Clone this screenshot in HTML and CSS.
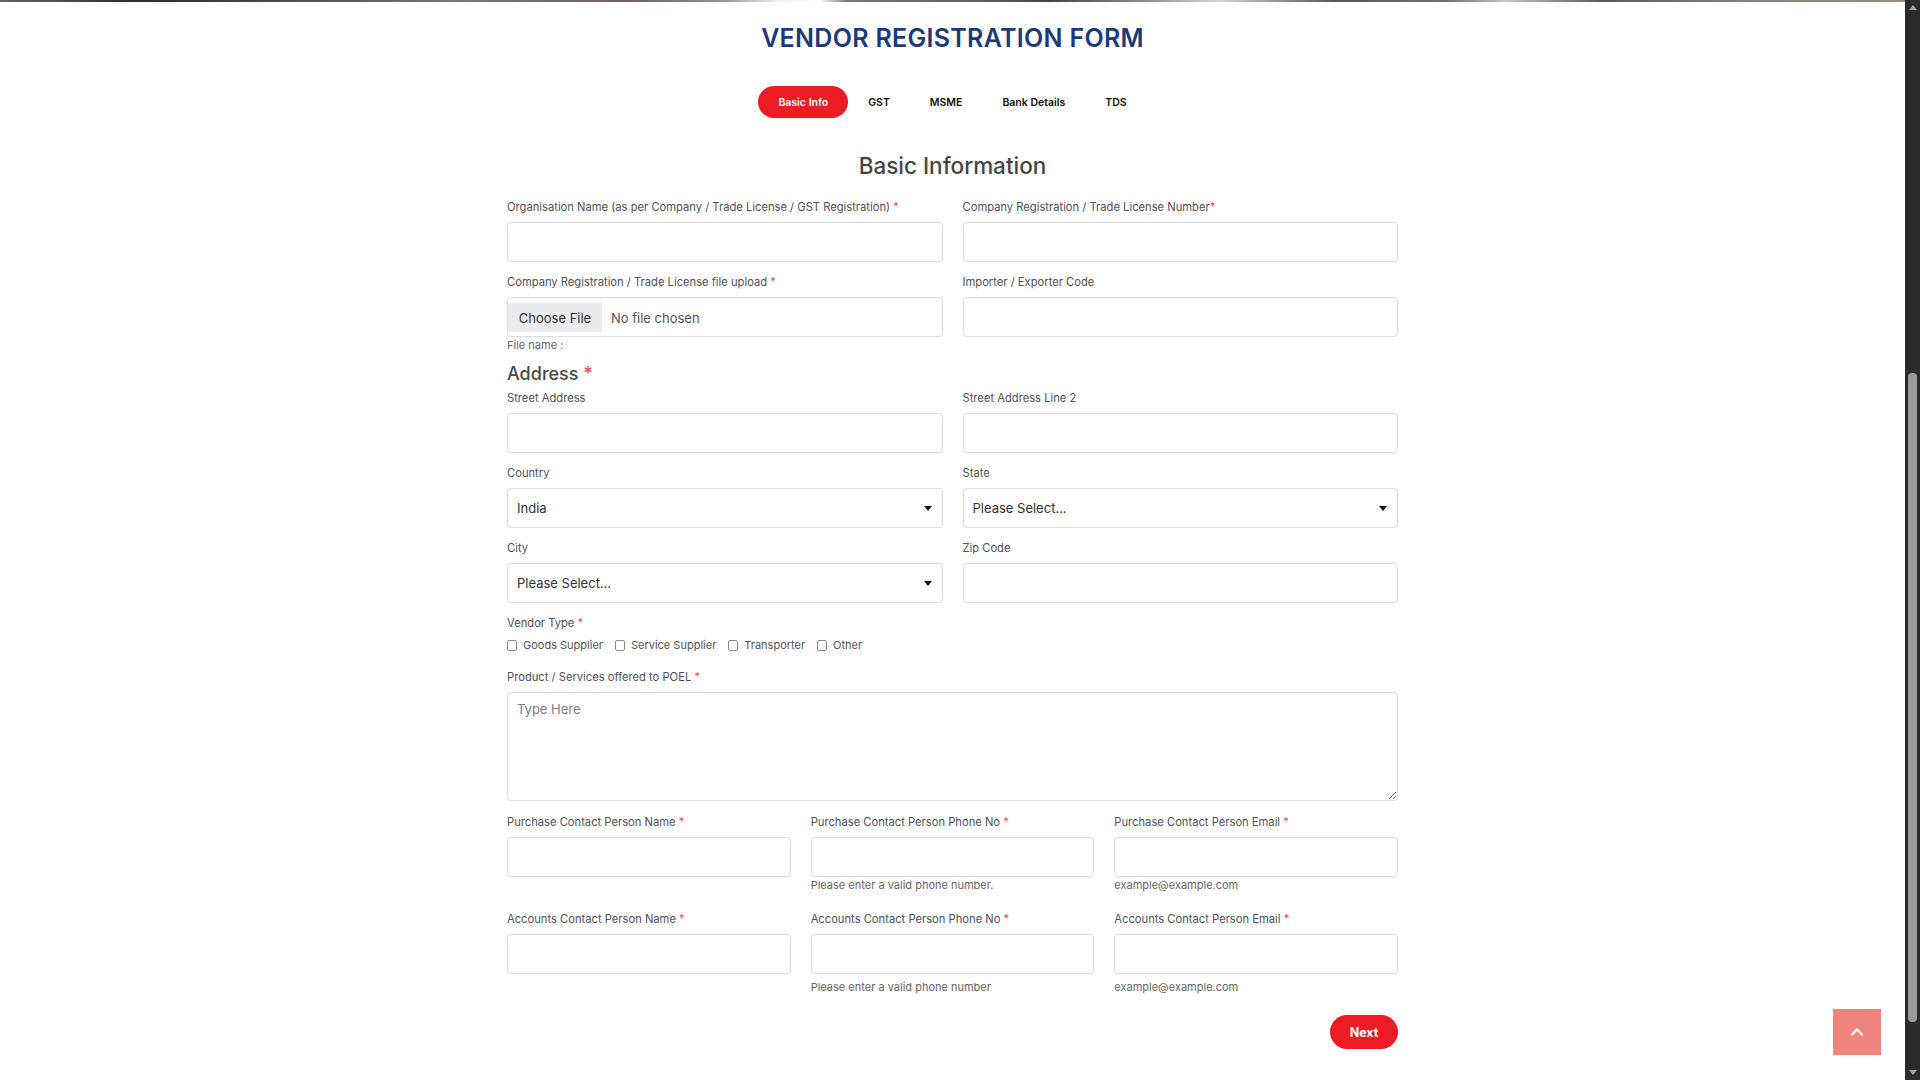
FILE: index.html
```html
<!DOCTYPE html>
<html lang="en">
<head>
<meta charset="utf-8">
<title>Vendor Registration Form</title>
<link rel="stylesheet" href="styles.css">
</head>
<body>
<div class="page">
  <main class="main">
    <div class="strip"></div>
    <h1 class="title">VENDOR REGISTRATION FORM</h1>
    <nav class="tabs">
      <span class="tab active">Basic Info</span>
      <span class="tab">GST</span>
      <span class="tab">MSME</span>
      <span class="tab">Bank Details</span>
      <span class="tab">TDS</span>
    </nav>

    <section class="form">
      <h2 class="section-title">Basic Information</h2>

      <div class="grid2 row-first">
        <div class="field">
          <label class="label">Organisation Name (as per Company / Trade License / GST Registration) <span class="req">*</span></label>
          <input class="control" type="text">
        </div>
        <div class="field">
          <label class="label">Company Registration / Trade License Number<span class="req">*</span></label>
          <input class="control" type="text">
        </div>
      </div>

      <div class="grid2 row-tight">
        <div class="field">
          <label class="label">Company Registration / Trade License file upload <span class="req">*</span></label>
          <div class="control file">
            <span class="file-btn">Choose File</span>
            <span class="file-text">No file chosen</span>
          </div>
          <div class="hint hint-file">File name :</div>
        </div>
        <div class="field">
          <label class="label">Importer / Exporter Code</label>
          <input class="control" type="text">
        </div>
      </div>

      <h3 class="address">Address <span class="req">*</span></h3>

      <div class="grid2 row">
        <div class="field">
          <label class="label">Street Address</label>
          <input class="control" type="text">
        </div>
        <div class="field">
          <label class="label">Street Address Line 2</label>
          <input class="control" type="text">
        </div>
      </div>

      <div class="grid2 row">
        <div class="field">
          <label class="label">Country</label>
          <div class="control select"><span>India</span><i class="caret"></i></div>
        </div>
        <div class="field">
          <label class="label">State</label>
          <div class="control select"><span>Please Select...</span><i class="caret"></i></div>
        </div>
      </div>

      <div class="grid2 row">
        <div class="field">
          <label class="label">City</label>
          <div class="control select"><span>Please Select...</span><i class="caret"></i></div>
        </div>
        <div class="field">
          <label class="label">Zip Code</label>
          <input class="control" type="text">
        </div>
      </div>

      <div class="vendor">
        <label class="label">Vendor Type <span class="req">*</span></label>
        <div class="checks">
          <span class="check"><i class="box"></i>Goods Supplier</span>
          <span class="check"><i class="box"></i>Service Supplier</span>
          <span class="check"><i class="box"></i>Transporter</span>
          <span class="check"><i class="box"></i>Other</span>
        </div>
      </div>

      <div class="products">
        <label class="label">Product / Services offered to POEL <span class="req">*</span></label>
        <textarea class="textarea" placeholder="Type Here"></textarea>
      </div>

      <div class="grid3 row-purchase">
        <div class="field">
          <label class="label">Purchase Contact Person Name <span class="req">*</span></label>
          <input class="control" type="text">
        </div>
        <div class="field">
          <label class="label">Purchase Contact Person Phone No <span class="req">*</span></label>
          <input class="control" type="text">
          <div class="hint">Please enter a valid phone number.</div>
        </div>
        <div class="field">
          <label class="label">Purchase Contact Person Email <span class="req">*</span></label>
          <input class="control" type="text">
          <div class="hint">example@example.com</div>
        </div>
      </div>

      <div class="grid3 row-accounts">
        <div class="field">
          <label class="label">Accounts Contact Person Name <span class="req">*</span></label>
          <input class="control" type="text">
        </div>
        <div class="field">
          <label class="label">Accounts Contact Person Phone No <span class="req">*</span></label>
          <input class="control" type="text">
          <div class="hint hint-late">Please enter a valid phone number</div>
        </div>
        <div class="field">
          <label class="label">Accounts Contact Person Email <span class="req">*</span></label>
          <input class="control" type="text">
          <div class="hint hint-late">example@example.com</div>
        </div>
      </div>

      <div class="actions">
        <button class="next" type="button">Next</button>
      </div>
    </section>
  </main>

  <div class="scrollbar">
    <div class="sb-btn"><i class="sb-up"></i></div>
    <div class="sb-track"><div class="sb-thumb"></div></div>
    <div class="sb-btn"><i class="sb-down"></i></div>
  </div>
</div>

<a class="to-top" href="#">
  <svg width="16" height="16" viewBox="0 0 16 16" aria-hidden="true"><path d="M3 10.5 L8 5.5 L13 10.5" fill="none" stroke="#fff" stroke-width="2.2" stroke-linecap="round" stroke-linejoin="round"/></svg>
</a>
</body>
</html>
```

FILE: styles.css
```css
* { box-sizing: border-box; }

html, body {
  margin: 0;
  padding: 0;
  background: #fff;
}

body {
  font-family: Inter, "Noto Sans", "Liberation Sans", sans-serif;
  color: #333;
}

.page {
  display: flex;
  height: 1080px;
  overflow: hidden;
}

.main {
  flex: 1;
  display: flex;
  flex-direction: column;
  align-items: center;
  min-width: 0;
}

.strip {
  align-self: stretch;
  height: 2px;
  background: linear-gradient(90deg, #6a625f 0%, #2e2e2e 7%, #4a4646 14%, #7c7674 24%, #6b6063 33%, #9b9396 38%, #f4f2f2 41%, #ffffff 43%, #7a7676 44.5%, #5d5d5b 52%, #3f4540 55%, #8d8c88 60%, #d8d4d2 64%, #5a5656 70%, #77706e 76%, #c9c2c0 79%, #5e5a5a 84%, #8a827e 92%, #9a8f84 100%);
}

.title {
  margin: 21px 0 0;
  font-size: 25px;
  line-height: 30px;
  font-weight: 600;
  letter-spacing: 0.3px;
  color: #1c3a78;
}

.tabs {
  display: flex;
  margin-top: 33px;
}

.tab {
  height: 32px;
  padding: 0 20px;
  border-radius: 16px;
  display: flex;
  align-items: center;
  font-size: 10.5px;
  font-weight: 600;
  color: #111;
}

.tab.active {
  background: #ed1c24;
  color: #fff;
}

.form {
  width: 891px;
  margin-top: 34px;
}

.section-title {
  margin: 0 0 19px;
  text-align: center;
  font-size: 22.5px;
  line-height: 28px;
  font-weight: 500;
  color: #454545;
}

.grid2 {
  display: grid;
  grid-template-columns: 1fr 1fr;
  column-gap: 20px;
}

.grid3 {
  display: grid;
  grid-template-columns: 1fr 1fr 1fr;
  column-gap: 20px;
}

.row-first { margin-bottom: 12px; }
.row { margin-bottom: 12px; }
.row-tight { margin-bottom: 0; }

.field { min-width: 0; }

.label {
  display: block;
  font-size: 11.2px;
  line-height: 16px;
  color: #505058;
  margin-bottom: 7px;
  white-space: nowrap;
}

.req { color: #f04b4b; }

.control {
  display: block;
  width: 100%;
  height: 40px;
  margin: 0;
  border: 1px solid #dcdce2;
  border-radius: 4px;
  background: #fff;
  font-family: inherit;
  font-size: 13px;
  outline: none;
}

.file {
  display: flex;
  align-items: center;
  padding: 5px 0 4px 0;
}

.file-btn {
  align-self: stretch;
  width: 94px;
  display: flex;
  align-items: center;
  justify-content: center;
  background: #e9ebee;
  color: #333;
  font-size: 13px;
}

.file-text {
  margin-left: 9px;
  font-size: 13px;
  color: #555;
}

.hint {
  font-size: 11px;
  line-height: 14px;
  color: #666;
  margin-top: 1px;
}

.hint-file { margin-top: 1px; }
.hint-late { margin-top: 6px; }

.address {
  margin: 11px 0 5px;
  font-size: 18px;
  line-height: 22px;
  font-weight: 500;
  color: #4a4a4a;
}

.select {
  display: flex;
  align-items: center;
  justify-content: space-between;
  padding: 0 10px 0 9px;
  color: #333;
}

.caret {
  width: 0;
  height: 0;
  border-left: 4px solid transparent;
  border-right: 4px solid transparent;
  border-top: 5px solid #111;
}

.checks {
  display: flex;
  align-items: center;
  height: 14px;
  gap: 12px;
}

.check {
  display: flex;
  align-items: center;
  font-size: 11px;
  line-height: 14px;
  color: #555;
}

.box {
  width: 10px;
  height: 11px;
  border: 1px solid #8a8a8a;
  border-radius: 2px;
  margin-right: 6px;
  background: #fff;
}

.products { margin-top: 17px; }

.textarea {
  display: block;
  width: 100%;
  height: 109px;
  margin: 0;
  border: 1px solid #dcdce2;
  border-radius: 4px;
  padding: 7px 9px;
  font-family: inherit;
  font-size: 13px;
  line-height: 18px;
  color: #333;
  resize: vertical;
  outline: none;
}

.textarea::placeholder { color: #7c7c8c; }

.row-purchase { margin-top: 13px; }
.row-accounts { margin-top: 19px; }

.actions {
  display: flex;
  justify-content: flex-end;
  margin-top: 21px;
}

.next {
  width: 68px;
  height: 34px;
  border: 0;
  border-radius: 17px;
  background: #ed1c24;
  color: #fff;
  font-family: inherit;
  font-size: 12.5px;
  font-weight: 700;
  padding: 0;
}

.scrollbar {
  width: 15px;
  flex: none;
  background: #2b2b2b;
  display: flex;
  flex-direction: column;
}

.sb-btn {
  height: 15px;
  display: flex;
  align-items: center;
  justify-content: center;
  flex: none;
}

.sb-up {
  width: 0;
  height: 0;
  border-left: 4px solid transparent;
  border-right: 4px solid transparent;
  border-bottom: 5px solid #a3a3a3;
}

.sb-down {
  width: 0;
  height: 0;
  border-left: 4px solid transparent;
  border-right: 4px solid transparent;
  border-top: 5px solid #a3a3a3;
}

.sb-track {
  flex: 1;
  padding: 358px 3px 0;
}

.sb-thumb {
  height: 649px;
  border-radius: 4px;
  background: #9a9a9a;
}

.to-top {
  position: fixed;
  right: 39px;
  bottom: 25px;
  width: 48px;
  height: 46px;
  background: #f0857d;
  display: flex;
  align-items: center;
  justify-content: center;
}
```
